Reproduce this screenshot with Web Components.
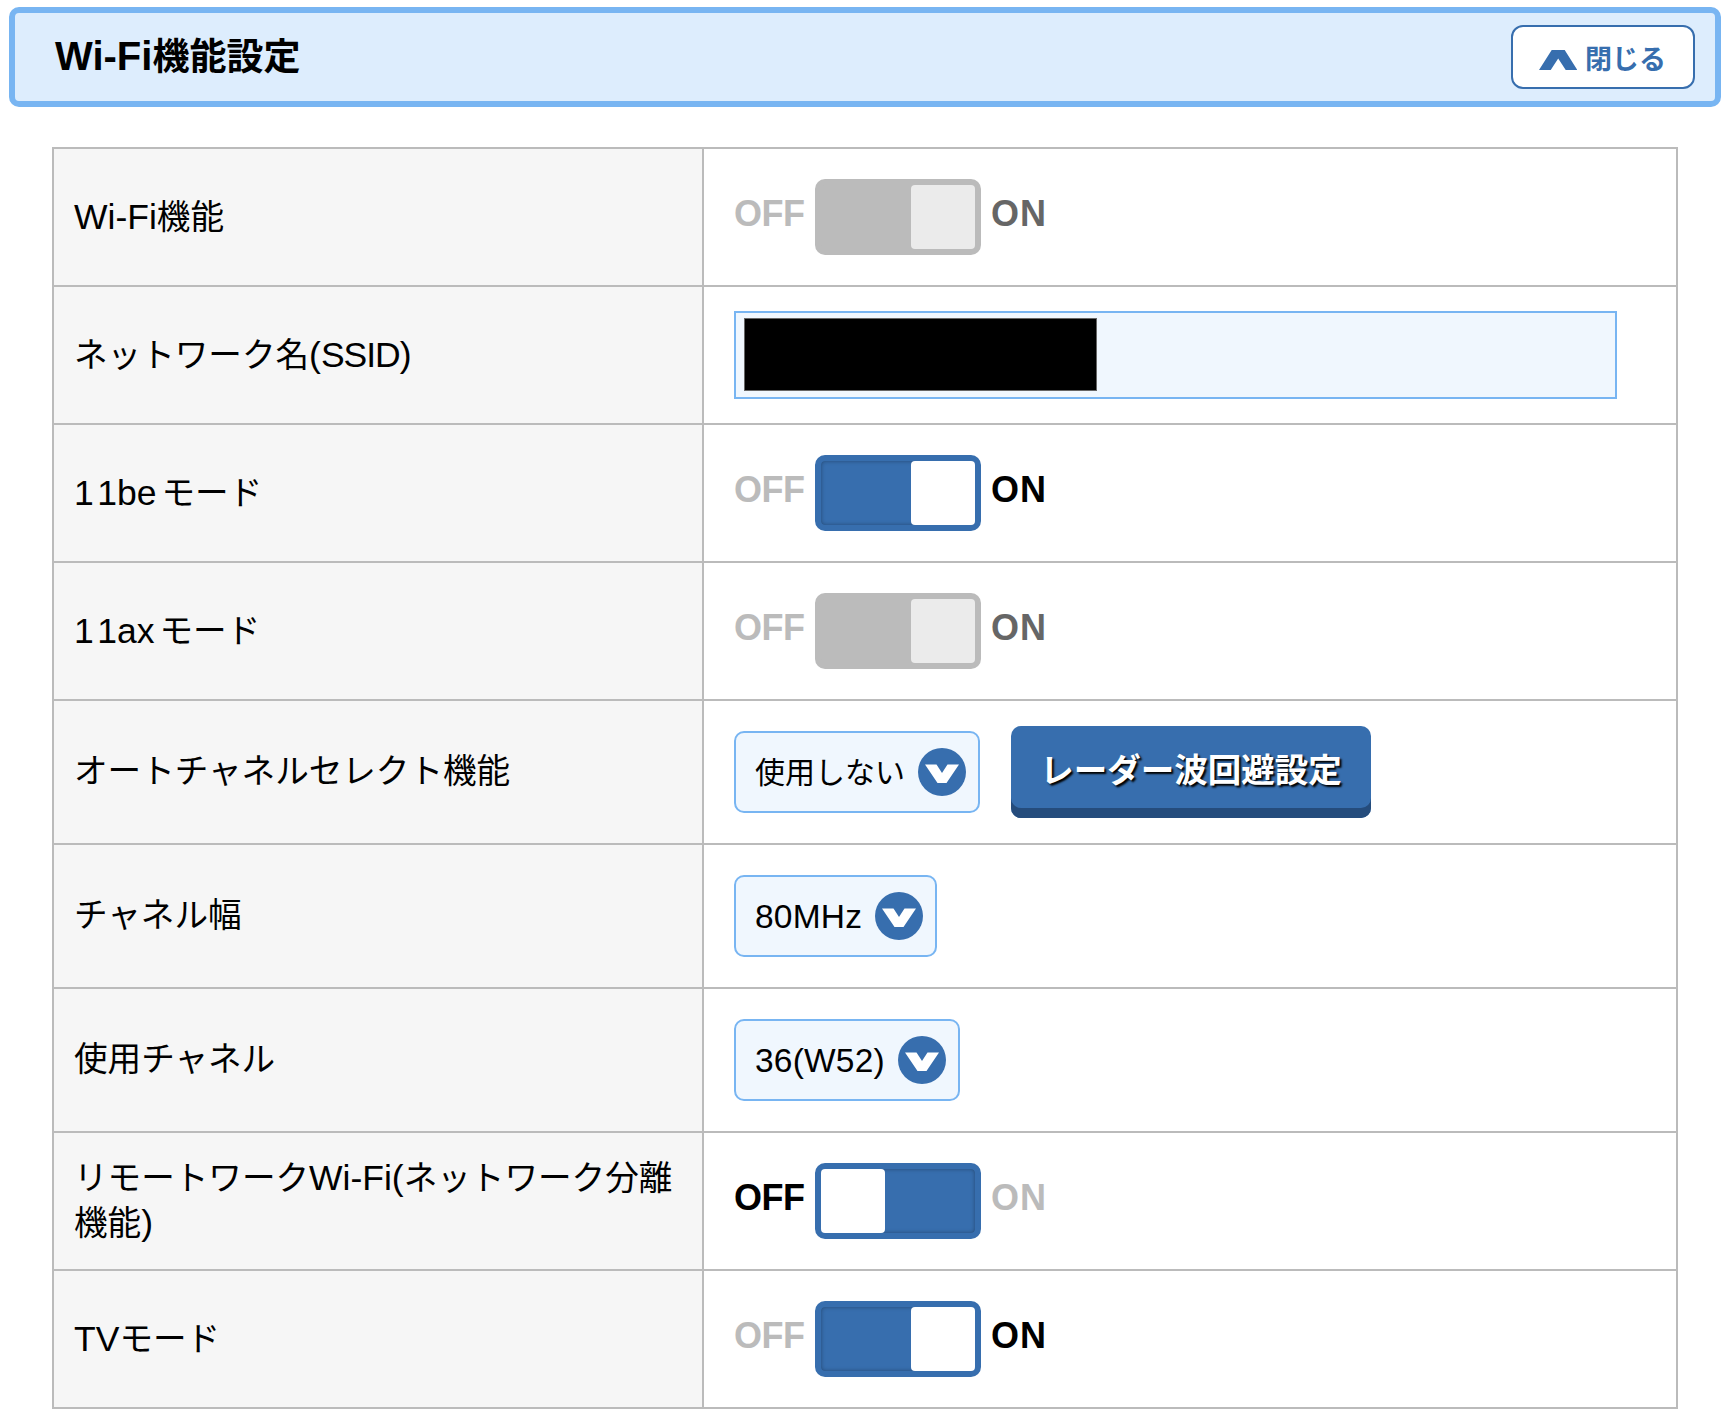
<!DOCTYPE html>
<html lang="ja">
<head>
<meta charset="utf-8">
<title>Wi-Fi機能設定</title>
<style>
    html, body { margin: 0; background: #fff; }
    body { font-family: "Noto Sans CJK JP", "Liberation Sans", sans-serif; color: #000; }
    .page { padding: 7px 7px 0 9px; }
</style>
</head>
<body>
<div class="page">
    <panel-header label="Wi-Fi機能設定"></panel-header>
    <settings-table>
        <settings-row label="Wi-Fi機能"><toggle-switch state="on" disabled></toggle-switch></settings-row>
        <settings-row label="ネットワーク名(SSID)"><ssid-input></ssid-input></settings-row>
        <settings-row label="11beモード"><toggle-switch state="on"></toggle-switch></settings-row>
        <settings-row label="11axモード"><toggle-switch state="on" disabled></toggle-switch></settings-row>
        <settings-row label="オートチャネルセレクト機能" tall>
            <select-box>使用しない</select-box>
            <raised-button>レーダー波回避設定</raised-button>
        </settings-row>
        <settings-row label="チャネル幅" tall><select-box latin>80MHz</select-box></settings-row>
        <settings-row label="使用チャネル" tall><select-box latin>36(W52)</select-box></settings-row>
        <settings-row label="リモートワークWi-Fi(ネットワーク分離|機能)"><toggle-switch state="off"></toggle-switch></settings-row>
        <settings-row label="TVモード"><toggle-switch state="on"></toggle-switch></settings-row>
    </settings-table>
</div>
<script>
(() => {
    const LATIN = '"Liberation Sans", "Noto Sans CJK JP", sans-serif';
    const CJK = '"Noto Sans CJK JP", "Liberation Sans", sans-serif';
    // latin runs sit larger than the kana in the original font, | marks a line break chance
    const markLatin = (text) => text.replace(/[\x20-\x7b\x7d\x7e]+/g, (run) => {
        const inner = run
            .replace(/^11/, '<span class="wide">1</span>1')
            .replace('SSID', '<span class="tight">SSID</span>');
        return `<span class="lat${run.startsWith('11') ? ' model' : ''}">${inner}</span>`;
    }).replace('|', '<wbr>');

    class PanelHeader extends HTMLElement {
        constructor() {
            super();
            this.attachShadow({ mode: 'open' });
            this.shadowRoot.innerHTML = `
                <style>
                    :host {
                        display: flex;
                        align-items: center;
                        justify-content: space-between;
                        box-sizing: border-box;
                        height: 100px;
                        padding: 0 20px 0 40px;
                        background: #ddedfd;
                        border: 6px solid #78b5f2;
                        border-radius: 10px;
                    }
                    h1 {
                        margin: 0;
                        padding-bottom: 2px;
                        font: 700 37px/1 ${CJK};
                        color: #000;
                    }
                    .lat { font-family: ${LATIN}; font-size: 40px; }
                    button {
                        display: flex;
                        align-items: center;
                        gap: 8px;
                        box-sizing: border-box;
                        width: 184px;
                        height: 64px;
                        padding: 0 0 0 26px;
                        background: #fff;
                        border: 2px solid #376eae;
                        border-radius: 12px;
                        color: #376eae;
                        font: 700 27px/1 ${CJK};
                    }
                    svg { display: block; margin-top: 6px; }
                </style>
                <h1>${markLatin(this.getAttribute('label'))}</h1>
                <button type="button">
                    <svg width="38" height="20" viewBox="0 0 38 20"><path fill="#376eae" d="M0 20 12.7 0H25.7L38.3 20H26.7L19.2 8.5 11.7 20Z"/></svg>
                    閉じる
                </button>`;
        }
    }
    customElements.define('panel-header', PanelHeader);

    class SettingsTable extends HTMLElement {
        constructor() {
            super();
            this.attachShadow({ mode: 'open' });
            this.shadowRoot.innerHTML = `
                <style>
                    :host {
                        display: block;
                        margin: 40px 43px 0 43px;
                        border: solid #bbb;
                        border-width: 2px 2px 0 2px;
                    }
                </style>
                <slot></slot>`;
        }
    }
    customElements.define('settings-table', SettingsTable);

    class SettingsRow extends HTMLElement {
        constructor() {
            super();
            this.attachShadow({ mode: 'open' });
            this.shadowRoot.innerHTML = `
                <style>
                    :host {
                        display: grid;
                        grid-template-columns: 648px 1fr;
                        min-height: 136px;
                        border-bottom: 2px solid #bbb;
                    }
                    :host([tall]) { min-height: 142px; }
                    .head {
                        display: flex;
                        align-items: center;
                        padding: 0 20px;
                        background: #f6f6f6;
                        font: 400 33.6px/44px ${LATIN};
                        color: #000;
                    }
                    .lat { font-size: 35.5px; }
                    .model { margin-right: 5px; }
                    .wide { letter-spacing: 3.5px; }
                    .tight { letter-spacing: -1px; }
                    .value {
                        display: flex;
                        align-items: center;
                        gap: 31px;
                        padding: 0 0 0 30px;
                        border-left: 2px solid #bbb;
                    }
                </style>
                <div class="head"><span>${markLatin(this.getAttribute('label'))}</span></div>
                <div class="value"><slot></slot></div>`;
        }
    }
    customElements.define('settings-row', SettingsRow);

    class ToggleSwitch extends HTMLElement {
        constructor() {
            super();
            this.attachShadow({ mode: 'open' });
            const on = this.getAttribute('state') === 'on';
            this.shadowRoot.innerHTML = `
                <style>
                    :host {
                        display: flex;
                        align-items: center;
                        gap: 10px;
                        font: 700 36px/1 ${LATIN};
                        --track: #376eae;
                        --knob: #fff;
                        --active: #000;
                    }
                    :host([disabled]) {
                        --track: #bbb;
                        --knob: #ebebeb;
                        --active: #666;
                    }
                    .label { color: #bbb; margin-top: -6px; }
                    .label.active { color: var(--active); }
                    .off { width: 71px; letter-spacing: -.5px; }
                    .on { width: 53px; letter-spacing: 1px; }
                    .track {
                        display: flex;
                        justify-content: ${on ? 'flex-end' : 'flex-start'};
                        box-sizing: border-box;
                        width: 166px;
                        height: 76px;
                        border: 6px solid var(--track);
                        border-radius: 10px;
                        background: var(--track);
                    }
                    :host(:not([disabled])) .track { box-shadow: inset 0 0 4px rgba(0, 0, 0, .35); }
                    .knob {
                        width: 64px;
                        height: 64px;
                        border-radius: 4px;
                        background: var(--knob);
                    }
                </style>
                <span class="label off ${on ? '' : 'active'}">OFF</span>
                <div class="track"><div class="knob"></div></div>
                <span class="label on ${on ? 'active' : ''}">ON</span>`;
        }
    }
    customElements.define('toggle-switch', ToggleSwitch);

    class SsidInput extends HTMLElement {
        constructor() {
            super();
            this.attachShadow({ mode: 'open' });
            this.shadowRoot.innerHTML = `
                <style>
                    :host {
                        display: flex;
                        align-items: center;
                        box-sizing: border-box;
                        width: 883px;
                        height: 88px;
                        padding: 0 0 1px 8px;
                        background: #f0f7fe;
                        border: 2px solid #78b5f2;
                    }
                    .mask {
                        width: 353px;
                        height: 73px;
                        background: #000;
                        box-shadow: inset 0 0 0 1px #666;
                    }
                </style>
                <div class="mask"></div>`;
        }
    }
    customElements.define('ssid-input', SsidInput);

    class SelectBox extends HTMLElement {
        constructor() {
            super();
            this.attachShadow({ mode: 'open' });
            this.shadowRoot.innerHTML = `
                <style>
                    :host {
                        display: inline-flex;
                        align-items: center;
                        gap: 13px;
                        box-sizing: border-box;
                        height: 82px;
                        padding: 0 12px 0 19px;
                        background: #f0f7fe;
                        border: 2px solid #78b5f2;
                        border-radius: 10px;
                        font: 400 30px/1 ${CJK};
                        color: #000;
                        --text-shift: -5px;
                    }
                    :host([latin]) {
                        font: 400 33.5px/1 ${LATIN};
                        letter-spacing: .2px;
                        --text-shift: 2px;
                    }
                    .text { margin-top: var(--text-shift); }
                    svg { display: block; flex: none; }
                </style>
                <span class="text"><slot></slot></span>
                <svg width="48" height="48" viewBox="0 0 48 48">
                    <circle cx="24" cy="24" r="24" fill="#376eae"/>
                    <path fill="#fff" d="M7 16.5H18.5L24 25 29.5 16.5H41L28.5 35H19.5Z"/>
                </svg>`;
        }
    }
    customElements.define('select-box', SelectBox);

    class RaisedButton extends HTMLElement {
        constructor() {
            super();
            this.attachShadow({ mode: 'open' });
            this.shadowRoot.innerHTML = `
                <style>
                    :host {
                        display: block;
                    }
                    button {
                        display: flex;
                        align-items: center;
                        justify-content: center;
                        box-sizing: border-box;
                        width: 360px;
                        height: 92px;
                        padding: 0 0 8px;
                        background: #376eae;
                        border: 0;
                        border-radius: 10px;
                        box-shadow: inset 0 -10px 0 #254c7c;
                        color: #fff;
                        font: 700 33.5px/1 ${CJK};
                        text-shadow: 2px 2px 2px #000;
                    }
                </style>
                <button type="button"><slot></slot></button>`;
        }
    }
    customElements.define('raised-button', RaisedButton);
})();
</script>
</body>
</html>
